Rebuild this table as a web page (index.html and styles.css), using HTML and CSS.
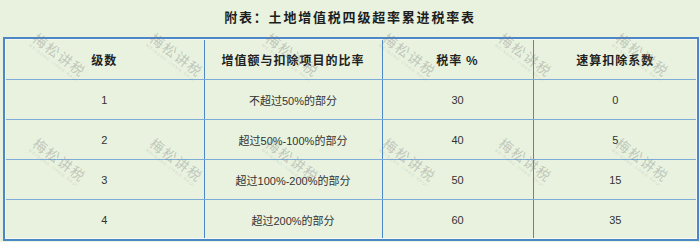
FILE: index.html
```html
<!DOCTYPE html>
<html lang="zh-CN">
<head>
<meta charset="utf-8">
<title>附表：土地增值税四级超率累进税率表</title>
<link rel="stylesheet" href="styles.css">
</head>
<body>
<div class="page">
  <h1 class="title">附表：土地增值税四级超率累进税率表</h1>
  <table class="rate-table">
    <colgroup>
      <col class="c1"><col class="c2"><col class="c3"><col class="c4">
    </colgroup>
    <thead>
      <tr><th>级数</th><th>增值额与扣除项目的比率</th><th>税率 %</th><th>速算扣除系数</th></tr>
    </thead>
    <tbody>
      <tr><td>1</td><td>不超过50%的部分</td><td>30</td><td>0</td></tr>
      <tr><td>2</td><td>超过50%-100%的部分</td><td>40</td><td>5</td></tr>
      <tr><td>3</td><td>超过100%-200%的部分</td><td>50</td><td>15</td></tr>
      <tr><td>4</td><td>超过200%的部分</td><td>60</td><td>35</td></tr>
    </tbody>
  </table>
  <div class="watermarks" aria-hidden="true">
    <div class="wm"><span class="wm-main">梅松讲税</span><span class="wm-sub">MEISONG JIANG SHUI</span></div>
    <div class="wm"><span class="wm-main">梅松讲税</span><span class="wm-sub">MEISONG JIANG SHUI</span></div>
    <div class="wm"><span class="wm-main">梅松讲税</span><span class="wm-sub">MEISONG JIANG SHUI</span></div>
    <div class="wm"><span class="wm-main">梅松讲税</span><span class="wm-sub">MEISONG JIANG SHUI</span></div>
    <div class="wm"><span class="wm-main">梅松讲税</span><span class="wm-sub">MEISONG JIANG SHUI</span></div>
    <div class="wm"><span class="wm-main">梅松讲税</span><span class="wm-sub">MEISONG JIANG SHUI</span></div>
    <div class="wm"><span class="wm-main">梅松讲税</span><span class="wm-sub">MEISONG JIANG SHUI</span></div>
    <div class="wm"><span class="wm-main">梅松讲税</span><span class="wm-sub">MEISONG JIANG SHUI</span></div>
    <div class="wm"><span class="wm-main">梅松讲税</span><span class="wm-sub">MEISONG JIANG SHUI</span></div>
    <div class="wm"><span class="wm-main">梅松讲税</span><span class="wm-sub">MEISONG JIANG SHUI</span></div>
    <div class="wm"><span class="wm-main">梅松讲税</span><span class="wm-sub">MEISONG JIANG SHUI</span></div>
    <div class="wm"><span class="wm-main">梅松讲税</span><span class="wm-sub">MEISONG JIANG SHUI</span></div>
  </div>
</div>
</body>
</html>
```

FILE: styles.css
```css
html, body {
  margin: 0;
  padding: 0;
  background: #e8f2df;
}

body {
  font-family: "Liberation Sans", "Noto Sans CJK SC", sans-serif;
  color: #333;
}

.page {
  position: relative;
  width: 700px;
  height: 242px;
  overflow: hidden;
  padding-top: 8px;
  box-sizing: border-box;
}

.title {
  margin: 0;
  height: 29px;
  line-height: 18px;
  font-size: 13px;
  font-weight: bold;
  letter-spacing: 1.8px;
  text-align: center;
  color: #1e1e1e;
  font-family: "Noto Sans CJK SC", sans-serif;
}

.rate-table {
  margin: 0 3px;
  width: 694px;
  border-collapse: collapse;
  table-layout: fixed;
  border: 2px solid #4c88c8;
  outline: 1px solid #f4f8ee;
  outline-offset: -3px;
}

.c1 { width: 200px; }
.c2 { width: 178px; }
.c3 { width: 151px; }
.c4 { width: 165px; }

.rate-table th,
.rate-table td {
  height: 39px;
  padding: 0;
  text-align: center;
  vertical-align: middle;
  border-top: 1px solid #7eacd9;
  border-bottom: 1px solid #7eacd9;
  border-left: 1px solid #4c88c8;
  border-right: 1px solid #4c88c8;
}

.rate-table th {
  height: 40px;
  font-size: 12px;
  font-weight: bold;
  letter-spacing: 1px;
  color: #222;
  font-family: "Noto Sans CJK SC", sans-serif;
}

.rate-table td {
  font-size: 11px;
  color: #333;
}

.watermarks {
  position: absolute;
  left: 0;
  top: 4px;
  width: 700px;
  display: grid;
  grid-template-columns: repeat(6, 116.6px);
  grid-auto-rows: 105px;
  pointer-events: none;
}

.wm {
  display: flex;
  flex-direction: column;
  align-items: center;
  justify-content: center;
  transform: rotate(37deg);
  color: rgba(125, 125, 125, 0.38);
}

.wm-main {
  font-family: "Noto Sans CJK SC", sans-serif;
  font-size: 14px;
  font-weight: normal;
  letter-spacing: 1.5px;
  line-height: 15px;
}

.wm-sub {
  font-size: 4px;
  line-height: 5px;
  letter-spacing: 1px;
  color: rgba(125, 125, 125, 0.3);
}
```
